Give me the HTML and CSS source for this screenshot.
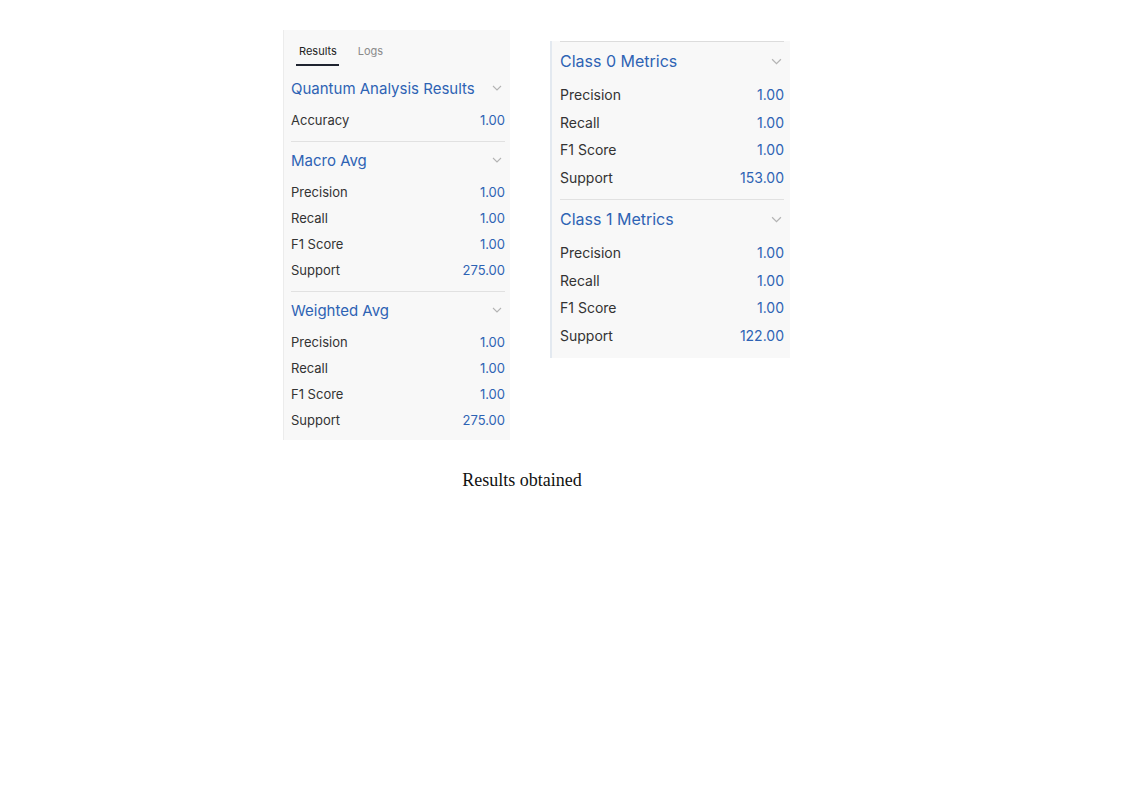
FILE: index.html
```html
<!DOCTYPE html>
<html lang="en">
<head>
    <meta charset="UTF-8">
    <meta name="viewport" content="width=device-width, initial-scale=1.0">
    <title>Results obtained</title>
    <link rel="stylesheet" href="styles.css">
</head>
<body>
    <figure class="figure">
        <div class="shots">
            <!-- left capture: tabs + summary metrics -->
            <div class="panel panel-main">
                <div class="tabs">
                    <span class="tab active">Results</span>
                    <span class="tab">Logs</span>
                </div>

                <div class="section section-first">
                    <div class="section-head">
                        <span>Quantum Analysis Results</span>
                        <svg class="chevron" viewBox="0 0 10 6"><path d="M1 1l4 4 4-4"/></svg>
                    </div>
                    <div class="row"><span>Accuracy</span><span class="val">1.00</span></div>
                </div>

                <div class="section">
                    <div class="section-head">
                        <span>Macro Avg</span>
                        <svg class="chevron" viewBox="0 0 10 6"><path d="M1 1l4 4 4-4"/></svg>
                    </div>
                    <div class="row"><span>Precision</span><span class="val">1.00</span></div>
                    <div class="row"><span>Recall</span><span class="val">1.00</span></div>
                    <div class="row"><span>F1 Score</span><span class="val">1.00</span></div>
                    <div class="row"><span>Support</span><span class="val">275.00</span></div>
                </div>

                <div class="section">
                    <div class="section-head">
                        <span>Weighted Avg</span>
                        <svg class="chevron" viewBox="0 0 10 6"><path d="M1 1l4 4 4-4"/></svg>
                    </div>
                    <div class="row"><span>Precision</span><span class="val">1.00</span></div>
                    <div class="row"><span>Recall</span><span class="val">1.00</span></div>
                    <div class="row"><span>F1 Score</span><span class="val">1.00</span></div>
                    <div class="row"><span>Support</span><span class="val">275.00</span></div>
                </div>
            </div>

            <!-- right capture: per-class metrics -->
            <div class="panel panel-class">
                <div class="class-body">
                    <div class="section">
                        <div class="section-head">
                            <span>Class 0 Metrics</span>
                            <svg class="chevron" viewBox="0 0 10 6"><path d="M1 1l4 4 4-4"/></svg>
                        </div>
                        <div class="row"><span>Precision</span><span class="val">1.00</span></div>
                        <div class="row"><span>Recall</span><span class="val">1.00</span></div>
                        <div class="row"><span>F1 Score</span><span class="val">1.00</span></div>
                        <div class="row"><span>Support</span><span class="val">153.00</span></div>
                    </div>

                    <div class="section">
                        <div class="section-head">
                            <span>Class 1 Metrics</span>
                            <svg class="chevron" viewBox="0 0 10 6"><path d="M1 1l4 4 4-4"/></svg>
                        </div>
                        <div class="row"><span>Precision</span><span class="val">1.00</span></div>
                        <div class="row"><span>Recall</span><span class="val">1.00</span></div>
                        <div class="row"><span>F1 Score</span><span class="val">1.00</span></div>
                        <div class="row"><span>Support</span><span class="val">122.00</span></div>
                    </div>
                </div>
            </div>
        </div>

        <figcaption class="caption">Results obtained</figcaption>
    </figure>
</body>
</html>
```

FILE: styles.css
```css
:root {
    --blue: #2e63b4;
    --text: #333333;
    --muted: #8a8a8a;
    --panel: #f8f8f8;
    --line: #e1e1e1;
}

* {
    margin: 0;
    padding: 0;
    box-sizing: border-box;
}

body {
    background: #ffffff;
    font-family: Inter, "Noto Sans", sans-serif;
    color: var(--text);
}

.figure {
    width: 478px;
    margin-left: 283px;
    padding-top: 30px;
}

.shots {
    display: flex;
    align-items: flex-start;
    gap: 40px;
    width: 507px;
}

.panel {
    background: var(--panel);
}

/* left capture */
.panel-main {
    width: 227px;
    padding: 0 5px 7px 7px;
    border-left: 1px solid #ececec;
}

.tabs {
    display: flex;
    gap: 16px;
    padding: 14px 0 0 5px;
    font-size: 11px;
}

.tab {
    line-height: 15px;
    padding: 0 2px 5px 3px;
    color: var(--muted);
    border-bottom: 2px solid transparent;
}

.tab.active {
    color: #222;
    border-bottom-color: #1f2430;
}

.section {
    padding: 3px 0 8px;
    border-bottom: 1px solid var(--line);
}

.section:last-child {
    border-bottom: none;
    padding-bottom: 0;
}

.section-first {
    padding-top: 7px;
}

.section-head {
    display: flex;
    justify-content: space-between;
    align-items: center;
    height: 30px;
    margin-bottom: 4px;
    color: var(--blue);
    font-size: 15px;
}

.chevron {
    width: 10px;
    height: 6px;
    margin-right: 3px;
    fill: none;
    stroke: #b4b4b4;
    stroke-width: 1.1;
}

.row {
    display: flex;
    justify-content: space-between;
    height: 26px;
    line-height: 26px;
    font-size: 13px;
}

.val {
    color: var(--blue);
}

/* right capture, shown slightly larger */
.panel-class {
    width: 240px;
    margin-top: 11px;
    padding: 0 6px 9px 8px;
    border-left: 2px solid #e3e9f0;
}

.class-body {
    border-top: 1px solid #dcdcdc;
}

.panel-class .section-head {
    height: 32px;
    font-size: 16px;
}

.panel-class .chevron {
    width: 11px;
    height: 7px;
    margin-right: 2px;
}

.panel-class .row {
    height: 27.5px;
    line-height: 27.5px;
    font-size: 14px;
}

.caption {
    margin-top: 30px;
    text-align: center;
    font-family: "Liberation Serif", serif;
    font-size: 18px;
    color: #111;
}
```
